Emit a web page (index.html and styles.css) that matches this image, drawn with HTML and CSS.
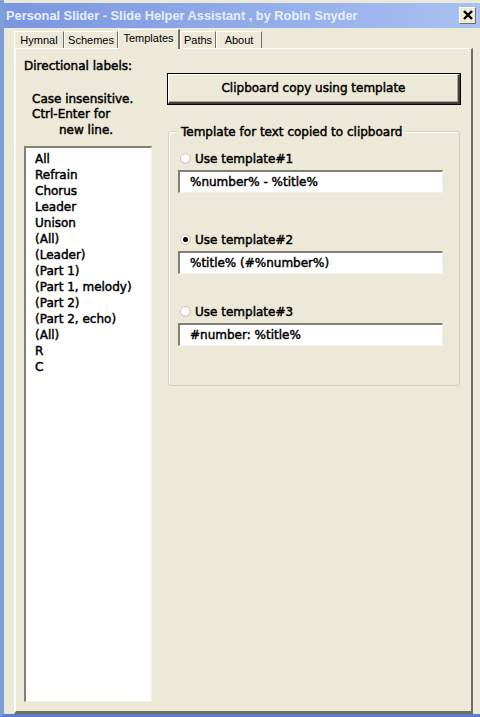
FILE: index.html
```html
<html lang="en">
  <head>
    <meta charset="UTF-8" />
    <title>Personal Slider</title>
    <link rel="stylesheet" href="styles.css">
  </head>
  <body>
    <div class="window">
      <div class="titlebar">
        <span class="title">Personal Slider - Slide Helper Assistant , by Robin Snyder</span>
        <div class="close">
          <svg width="10" height="10" viewBox="0 0 10 10">
            <path d="M1 1 L9 9 M9 1 L1 9" stroke="#000" stroke-width="2.4" />
          </svg>
        </div>
      </div>

      <div class="tabs">
        <div class="tab tab-hymnal">Hymnal</div>
        <div class="tab tab-schemes">Schemes</div>
        <div class="tab tab-templates active">Templates</div>
        <div class="tab tab-paths">Paths</div>
        <div class="tab tab-about">About</div>
      </div>

      <div class="panel">
        <div class="left">
          <div class="heading">Directional labels:</div>
          <div class="hint">
            <div>Case insensitive.</div>
            <div>Ctrl-Enter for</div>
            <div class="indent">new line.</div>
          </div>
          <div class="listbox">
            <div>All</div>
            <div>Refrain</div>
            <div>Chorus</div>
            <div>Leader</div>
            <div>Unison</div>
            <div>(All)</div>
            <div>(Leader)</div>
            <div>(Part 1)</div>
            <div>(Part 1, melody)</div>
            <div>(Part 2)</div>
            <div>(Part 2, echo)</div>
            <div>(All)</div>
            <div>R</div>
            <div>C</div>
          </div>
        </div>

        <div class="right">
          <div class="button">Clipboard copy using template</div>

          <div class="group">
            <div class="legend">Template for text copied to clipboard</div>

            <div class="option first">
              <div class="radio-row"><span class="radio"></span>Use template#1</div>
              <div class="field">%number% - %title%</div>
            </div>
            <div class="option second">
              <div class="radio-row"><span class="radio checked"></span>Use template#2</div>
              <div class="field">%title% (#%number%)</div>
            </div>
            <div class="option third">
              <div class="radio-row"><span class="radio"></span>Use template#3</div>
              <div class="field">#number: %title%</div>
            </div>
          </div>
        </div>
      </div>
    </div>
  </body>
</html>
```

FILE: styles.css
```css
body {
  background-color: #ece9d8;
  color: #000;
  font-family: "DejaVu Sans", Verdana, sans-serif;
  font-size: 12px;
  height: 717px;
  margin: 0;
  overflow: hidden;
  width: 480px;
}

.window {
  background-color: #ece9d8;
  border-bottom: 3px solid #5a7fc8;
  border-left: 4px solid #7d9fd8;
  box-sizing: border-box;
  display: flex;
  flex-direction: column;
  height: 717px;
  padding-top: 3px;
}

.titlebar {
  align-items: center;
  background: linear-gradient(to right, #7a97df, #a9c0f2);
  display: flex;
  height: 25px;
  justify-content: space-between;
  padding-left: 2px;
  padding-right: 4px;
}

.title {
  color: #e8eeff;
  font-family: "Liberation Sans", Arial, sans-serif;
  font-size: 12.8px;
  font-weight: bold;
}

.close {
  align-items: center;
  background-color: #ece9d8;
  border-bottom: 1px solid #716f64;
  border-left: 1px solid #fff;
  border-right: 1px solid #716f64;
  border-top: 1px solid #fff;
  display: flex;
  height: 15px;
  justify-content: center;
  width: 15px;
}

.tabs {
  align-items: flex-end;
  display: flex;
  font-family: "Liberation Sans", Arial, sans-serif;
  height: 20px;
  padding-left: 10px;
}

.tab {
  border-left: 1px solid #fff;
  border-right: 1px solid #716f64;
  border-top: 1px solid #fff;
  box-sizing: border-box;
  font-size: 11px;
  height: 17px;
  line-height: 16px;
  text-align: center;
}

.tab-hymnal { width: 50px; }
.tab-schemes { width: 54px; }
.tab-templates { width: 62px; }
.tab-paths { width: 36px; }
.tab-about { width: 46px; }

.tab.active {
  background-color: #ece9d8;
  border-right: 2px solid #716f64;
  height: 20px;
  line-height: 17px;
  margin-bottom: -1px;
  position: relative;
}

.panel {
  border-bottom: 3px solid #716f64;
  border-left: 2px solid #fff;
  border-right: 2px solid #716f64;
  border-top: 1px solid #fff;
  display: flex;
  gap: 16px;
  height: 657px;
  margin-left: 10px;
  margin-right: 7px;
  padding: 10px 8px 0 8px;
  -webkit-text-stroke: 0.45px #000;
}

.left {
  display: flex;
  flex-direction: column;
  width: 128px;
}

.heading {
  height: 33px;
}

.hint {
  line-height: 15.5px;
  padding-left: 8px;
}

.hint .indent {
  padding-left: 27px;
}

.listbox {
  background-color: #fff;
  border-bottom: 1px solid #f2f0e8;
  border-left: 2px solid #848078;
  border-right: 1px solid #f2f0e8;
  border-top: 2px solid #848078;
  height: 550px;
  line-height: 16px;
  margin-top: 8px;
  padding: 3px 0 0 9px;
}

.right {
  display: flex;
  flex-direction: column;
  width: 292px;
}

.button {
  border-bottom: 2px solid #404040;
  border-left: 1px solid #fff;
  border-right: 2px solid #404040;
  border-top: 1px solid #fff;
  box-shadow: inset -1px -1px 0 #aca899, 0 0 0 1px #000;
  height: 27px;
  line-height: 27px;
  margin-top: 15px;
  text-align: center;
}

.group {
  border: 1px solid #d0d0bf;
  border-radius: 3px;
  box-shadow: inset 1px 1px 0 #fff;
  height: 253px;
  margin-top: 27px;
  padding: 0 16px 0 9px;
  position: relative;
}

.legend {
  background-color: #ece9d8;
  left: 8px;
  line-height: 16px;
  padding: 0 4px;
  position: absolute;
  top: -8px;
}

.option.first {
  margin-top: 19px;
}

.option.second {
  margin-top: 39px;
}

.option.third {
  margin-top: 30px;
}

.radio-row {
  align-items: center;
  display: flex;
  height: 16px;
}

.radio {
  background: radial-gradient(circle at 40% 40%, #fff 40%, #dcdad0);
  border: 1px solid #c8c6bc;
  border-radius: 50%;
  box-sizing: border-box;
  height: 11px;
  margin-left: 2px;
  margin-right: 4px;
  position: relative;
  width: 11px;
  -webkit-text-stroke: 0;
}

.radio.checked::after {
  background-color: #000;
  border-radius: 50%;
  content: "";
  height: 5px;
  left: 2px;
  position: absolute;
  top: 2px;
  width: 5px;
}

.field {
  background-color: #fff;
  border-bottom: 1px solid #f2f0e8;
  border-left: 2px solid #848078;
  border-right: 1px solid #f2f0e8;
  border-top: 2px solid #848078;
  height: 20px;
  line-height: 20px;
  margin-top: 3px;
  padding-left: 10px;
}
```
